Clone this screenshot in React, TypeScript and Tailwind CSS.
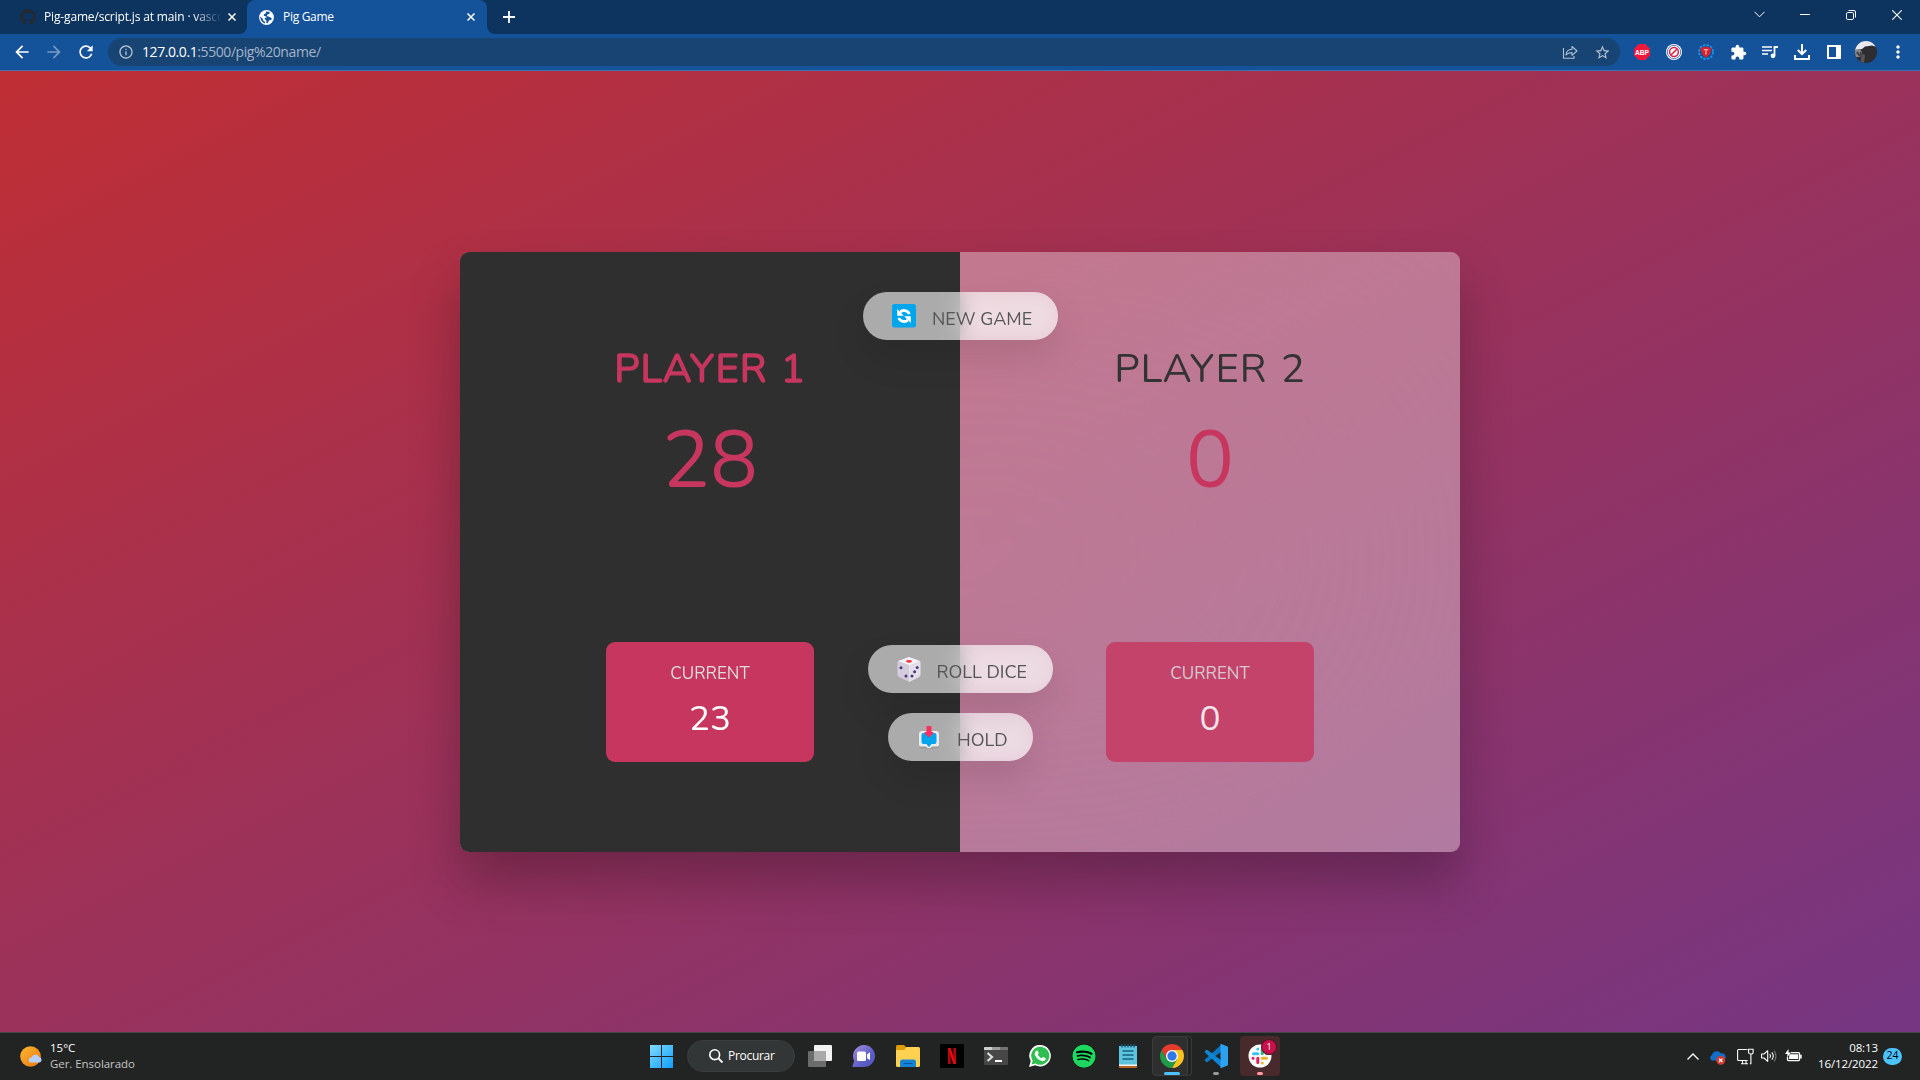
import type { ReactNode } from 'react';
import { FaGithub, FaSpotify } from 'react-icons/fa';
import {
  MdArrowBack,
  MdArrowForward,
  MdExtension,
  MdInfoOutline,
  MdMoreVert,
  MdRefresh,
  MdStarBorder,
} from 'react-icons/md';

/* ---------- Browser window ---------- */

function CloseX({ className = '' }: { className?: string }) {
  return (
    <svg viewBox="0 0 8 8" className={`h-2 w-2 shrink-0 ${className}`} stroke="currentColor" strokeWidth="1.5">
      <path d="M.5.5l7 7M7.5.5l-7 7" />
    </svg>
  );
}

function GlobeIcon() {
  return (
    <svg viewBox="0 0 15 15" className="h-[15px] w-[15px] shrink-0">
      <circle cx="7.500" cy="7.500" r="7.400" fill="#fff" />
      <path d="M7.200 1.600l3.600.3-.4 1.800-2 .7-.4 1.700 2 .6 2.600 1.300-.3 2-2.200.2-1.500 3-1.300-.2.100-2.600-1.700-1.500.2-1.200 2-.3-.7-1-2.300-.6-.2-1.500 1.700-.5z" fill="#14529a" />
      <path d="M1.300 6.500l2.300 2.200.6 1.800 1.700 1.200.2 1.700C3.300 12.800 1.200 10 1.300 6.500z" fill="#14529a" />
    </svg>
  );
}

function WindowButton({ children }: { children: ReactNode }) {
  return <div className="flex h-[29px] w-[46px] items-center justify-center text-white">{children}</div>;
}

function TabStrip() {
  return (
    <div className="flex h-[34px] bg-[#0c345f] text-xs text-white">
      <div className="flex w-[239px] shrink-0 items-center pl-5">
        <FaGithub className="h-4 w-4 shrink-0 text-[#24292e]" />
        <div className="-mr-3 ml-2 w-[190px] shrink-0 whitespace-nowrap [mask-image:linear-gradient(to_right,black_148px,transparent_178px)]">
          <span className="tracking-[-0.15px]">Pig-game/script.js at main · vasco</span>
        </div>
        <CloseX className="ml-[6px]" />
      </div>
      <div className="flex items-end bg-[#14529a]">
        <div className="h-[34px] w-2 rounded-br-lg bg-[#0c345f]" />
      </div>
      <div className="flex bg-[#0c345f]">
        <div className="flex h-[34px] w-[240px] items-center rounded-t-lg bg-[#14529a] pl-3">
          <GlobeIcon />
          <span className="ml-[9px] tracking-[-0.3px]">Pig Game</span>
          <CloseX className="ml-auto mr-[12px]" />
        </div>
      </div>
      <div className="flex items-end bg-[#14529a]">
        <div className="h-[34px] w-2 rounded-bl-lg bg-[#0c345f]" />
      </div>
      <svg viewBox="0 0 12 12" className="ml-2 mt-[11px] h-3 w-3" stroke="white" strokeWidth="1.8">
        <path d="M6 0v12M0 6h12" />
      </svg>
      <div className="ml-auto flex">
        <WindowButton>
          <svg viewBox="0 0 11 7" className="h-[7px] w-[11px]" fill="none" stroke="currentColor" strokeWidth="1">
            <path d="M.5.8l5 5 5-5" />
          </svg>
        </WindowButton>
        <WindowButton>
          <div className="h-px w-[10px] bg-white" />
        </WindowButton>
        <WindowButton>
          <svg viewBox="0 0 10 10" className="h-[10px] w-[10px]" fill="none" stroke="currentColor">
            <rect x=".5" y="2.5" width="7" height="7" rx="1.3" />
            <path d="M2.5.5H8Q9.5.5 9.500 2v5.5" />
          </svg>
        </WindowButton>
        <WindowButton>
          <svg viewBox="0 0 10 10" className="h-[10px] w-[10px]" stroke="currentColor" strokeWidth="1.1">
            <path d="M.3.3l9.400 9.400M9.700.3L.3 9.700" />
          </svg>
        </WindowButton>
      </div>
    </div>
  );
}

function ToolbarCell({ children }: { children: ReactNode }) {
  return <div className="flex w-8 shrink-0 items-center justify-center text-white">{children}</div>;
}

function Toolbar() {
  return (
    <div className="flex h-[37px] items-center border-b border-[#3f74b0] bg-[#14529a] pl-[6px] pr-[6px]">
      <ToolbarCell>
        <MdArrowBack className="h-5 w-5" />
      </ToolbarCell>
      <div className="flex w-8 justify-center text-[#769ac6]">
        <MdArrowForward className="h-5 w-5" />
      </div>
      <div className="flex w-8 justify-center text-white">
        <MdRefresh className="h-5 w-5" />
      </div>
      <div className="ml-[6px] flex h-7 w-[1512px] items-center rounded-full bg-[#184473] pl-[10px]">
        <MdInfoOutline className="h-4 w-4 text-[#b1c0d2]" />
        <span className="ml-[8px] text-sm tracking-[-0.42px] text-[#a3b4c8]">
          <span className="text-white">127.0.0.1</span>:5500/pig%20name/
        </span>
        <div className="ml-auto mr-[2px] flex text-[#b1c0d2]">
          <div className="flex w-8 items-center justify-center">
            <svg viewBox="0 0 16 14" className="h-[14px] w-4" fill="none" stroke="currentColor" strokeWidth="1.1">
              <path d="M1.500 3v10.300h10.500V11" />
              <path d="M4 10c.3-3.600 2.500-5.600 6-5.700V1.500L15 6l-5 4.300V7.600C7.300 7.600 5.500 8.300 4 10z" strokeLinejoin="round" />
            </svg>
          </div>
          <div className="flex w-8 items-center justify-center">
            <MdStarBorder className="h-[17px] w-[17px]" />
          </div>
        </div>
      </div>
      <div className="ml-[6px] flex h-full items-center">
        <ToolbarCell>
          <svg viewBox="0 0 16 16" className="h-4 w-4">
            <path d="M4.700 0h6.600L16 4.700v6.600L11.300 16H4.700L0 11.300V4.700z" fill="#f0193c" />
            <text
              x="1"
              y="10.800"
              textLength="14"
              lengthAdjust="spacingAndGlyphs"
              fontFamily="Liberation Sans"
              fontWeight="700"
              fontSize="8"
              fill="#fff"
            >
              ABP
            </text>
          </svg>
        </ToolbarCell>
        <ToolbarCell>
          <svg viewBox="0 0 16 16" className="h-4 w-4" fill="none">
            <circle cx="8" cy="8" r="8" fill="#fff" />
            <circle cx="8" cy="8" r="6.700" stroke="#2c5fb0" strokeWidth=".8" />
            <circle cx="8" cy="8" r="4.400" stroke="#dd1f45" strokeWidth="1.500" />
            <path d="M5.200 10.800l5.600-5.600" stroke="#dd1f45" strokeWidth="1.600" />
          </svg>
        </ToolbarCell>
        <ToolbarCell>
          <svg viewBox="0 0 16 16" className="h-4 w-4" fill="none">
            <circle cx="8" cy="8" r="7" stroke="#1b9af0" strokeWidth="1.600" strokeDasharray="2.600 1.100" />
            <path d="M8 2.200c1.700 1 3.200 1.300 5.300 1.300 0 4.800-1.600 8-5.300 10.200-3.700-2.200-5.300-5.400-5.300-10.200 2.100 0 3.600-.3 5.300-1.300z" fill="#d8212c" />
            <path d="M5.800 5.600h4.400M8 5.600v5" stroke="#f3a8ac" strokeWidth="1.300" />
          </svg>
        </ToolbarCell>
        <ToolbarCell>
          <MdExtension className="h-[17px] w-[17px]" />
        </ToolbarCell>
        <ToolbarCell>
          <svg viewBox="0 0 16 14" className="h-[14px] w-4" fill="none" stroke="currentColor" strokeWidth="1.600">
            <path d="M0 2h10M0 5.500h10M0 9h6" />
            <path d="M12.500 10.500V2H16" strokeWidth="1.800" />
            <circle cx="11" cy="10.800" r="2.400" fill="currentColor" stroke="none" />
          </svg>
        </ToolbarCell>
        <ToolbarCell>
          <svg viewBox="0 0 16 16" className="h-4 w-4" fill="none" stroke="currentColor" strokeWidth="2">
            <path d="M8 0v10M3.800 6L8 10.200 12.200 6M1 11v4h14v-4" />
          </svg>
        </ToolbarCell>
        <ToolbarCell>
          <div className="h-[14px] w-[14px] border-2 border-r-[5px] border-white" />
        </ToolbarCell>
        <ToolbarCell>
          <svg viewBox="0 0 22 22" className="h-[22px] w-[22px]">
            <defs>
              <clipPath id="avatar">
                <circle cx="11" cy="11" r="11" />
              </clipPath>
            </defs>
            <g clipPath="url(#avatar)">
              <rect width="22" height="22" fill="#2e2d30" />
              <path d="M0 0h22v6l-5-1.500-7 1L7 8 0 9z" fill="#e9eaf1" />
              <path d="M0 9l5-1 2 3-1 5-6 0z" fill="#8b8789" />
              <path d="M1 12l2-2 1 3 2-3 1 3-1 4z" fill="#45434a" />
              <path d="M7 13l3 1-1 8H5z" fill="#57545a" />
            </g>
          </svg>
        </ToolbarCell>
        <ToolbarCell>
          <MdMoreVert className="h-5 w-5" />
        </ToolbarCell>
      </div>
    </div>
  );
}

/* ---------- Game ---------- */

type PlayerProps = { name: string; score: number; current: number; active?: boolean };

function Player({ name, score, current, active = false }: PlayerProps) {
  return (
    <section className={`flex flex-1 flex-col items-center pt-[90px] ${active ? 'bg-[#2f2f2f]' : ''}`}>
      <h2
        className={`h-[55px] whitespace-nowrap text-[40px] leading-[55px] tracking-[1px] uppercase [word-spacing:2px] ${
          active ? 'text-[#c7365f] [-webkit-text-stroke:1.3px_#c7365f]' : 'text-[#333]'
        }`}
      >
        {name}
      </h2>
      <p className="mt-[10px] h-[109px] text-[80px] leading-[108px] text-[#c7365f]">{score}</p>
      <div
        className={`mt-[126px] flex h-[120px] w-[208px] flex-col items-center rounded-[9px] bg-[#c7365f] pt-5 ${
          active ? '' : 'opacity-80'
        }`}
      >
        <p className="h-[22px] text-[17px] leading-[23px] text-[#ddd]">CURRENT</p>
        <p className="mt-[10px] h-12 text-[35px] leading-[50px] text-white">{current}</p>
      </div>
    </section>
  );
}

function PillButton({ className, icon, children }: { className: string; icon: ReactNode; children: ReactNode }) {
  return (
    <button
      className={`absolute flex h-12 items-center whitespace-nowrap rounded-full bg-white/60 text-lg text-[#555] shadow-[0_17.5px_35px_rgba(0,0,0,0.1)] backdrop-blur-[10px] ${className}`}
    >
      {icon}
      {children}
    </button>
  );
}

function RefreshTile() {
  return (
    <svg viewBox="0 0 24 24" className="h-6 w-6" fill="none">
      <rect width="24" height="23.500" rx="2.500" fill="#00a6ed" />
      <path d="M8.200 8.200C10.500 5.500 15.500 6 17.300 10M15.800 15.800C13.500 18.500 8.500 18 6.700 14" stroke="#fff" strokeWidth="2.800" />
      <path d="M5.200 5v6.700h6.600zM18.800 19v-6.700h-6.600z" fill="#fff" />
    </svg>
  );
}

function DiceIcon() {
  return (
    <svg viewBox="0 0 24 25" className="h-[25px] w-6">
      <path d="M12 .5L23 4.500 12.500 9 1 4.500z" fill="#f4f1f8" stroke="#f4f1f8" strokeLinejoin="round" />
      <path d="M1 4.500l11.500 4.300V24.500L2 19.500Q1 19 1 18z" fill="#d3cadb" stroke="#d3cadb" strokeLinejoin="round" />
      <path d="M23 4.500L12.500 8.800V24.500L22 19.500Q23 19 23 18z" fill="#e4deeb" stroke="#e4deeb" strokeLinejoin="round" />
      <ellipse cx="12" cy="4.300" rx="3" ry="1.400" fill="#f3342f" />
      <g fill="#46397a">
        <circle cx="4" cy="10.700" r="1.500" />
        <circle cx="9" cy="19" r="1.500" />
        <circle cx="15" cy="19" r="1.500" />
        <circle cx="17.600" cy="14.800" r="1.500" />
        <circle cx="20.200" cy="10.500" r="1.500" />
      </g>
    </svg>
  );
}

function InboxIcon() {
  return (
    <svg viewBox="0 0 20 23" className="h-[23px] w-5">
      <path d="M2.500 7h15Q20 7 20 9.500V20q0 2.500-2.500 2.500h-15Q0 22.500 0 20V9.500Q0 7 2.500 7z" fill="#9b9b9b" />
      <path d="M3 5h14q3 0 3 3v11q0 1.500-2 1.500h-4.500L11 22H9l-2.500-1.500H2Q0 20.500 0 19V8q0-3 3-3z" fill="#eceaec" />
      <path d="M4.500 7h11q2 0 2 2v7q0 2-2 2h-3L10.700 20.500H9.300L7.500 18h-3q-2 0-2-2V9q0-2 2-2z" fill="#00a6ed" />
      <path d="M7.500 0h5v6h2Q14.500 8 10 11.500 5.500 8 5.500 6h2z" fill="#f8315f" />
    </svg>
  );
}

function GamePage() {
  return (
    <div className="flex h-[961px] items-center justify-center bg-[linear-gradient(to_top_left,#753682_0%,#bf2e34_100%)] font-['Nunito','Lato',sans-serif]">
      <main className="relative mt-px flex h-[600px] w-[1000px] rounded-[9px] bg-white/35 shadow-[0_30px_50px_rgba(0,0,0,0.25)] backdrop-blur-[200px]">
        <div className="flex flex-1 overflow-hidden rounded-[9px]">
          <Player name="Player 1" score={28} current={23} active />
          <Player name="Player 2" score={0} current={0} />
        </div>
        <PillButton className="left-[402.5px] top-10 w-[195px] pl-[29.5px]" icon={<RefreshTile />}>
          <span className="ml-4 mt-[5px]">NEW GAME</span>
        </PillButton>
        <PillButton className="left-[407.5px] top-[393px] w-[185px] pl-[29px]" icon={<DiceIcon />}>
          <span className="ml-4 mt-[5px]">ROLL DICE</span>
        </PillButton>
        <PillButton className="left-[427.5px] top-[461px] w-[145px] pl-[31.5px]" icon={<InboxIcon />}>
          <span className="ml-[18px] mt-[5px]">HOLD</span>
        </PillButton>
      </main>
    </div>
  );
}

/* ---------- Taskbar ---------- */

function TaskCell({ children, className = '' }: { children: ReactNode; className?: string }) {
  return <div className={`relative flex h-10 w-11 shrink-0 items-center justify-center ${className}`}>{children}</div>;
}

function WindowsLogo() {
  return (
    <svg viewBox="0 0 23 23" className="h-[23px] w-[23px]">
      <defs>
        <linearGradient id="win" x1="0" y1="0" x2="1" y2="1" gradientUnits="objectBoundingBox">
          <stop offset="0" stopColor="#7fdcff" />
          <stop offset="1" stopColor="#0f9dfb" />
        </linearGradient>
      </defs>
      <path d="M0 0h11v11H0zM12 0h11v11H12zM0 12h11v11H0zM12 12h11v11H12z" fill="url(#win)" />
    </svg>
  );
}

function TaskViewIcon() {
  return (
    <svg viewBox="0 0 24 22" className="h-[22px] w-6">
      <rect x="6" width="18" height="16" rx="1" fill="#f2f2f2" />
      <rect y="6" width="18" height="16" rx="1" fill="#6c6c6c" />
      <path d="M6 6h12v10H6z" fill="#a9a9a9" />
    </svg>
  );
}

function ChatIcon() {
  return (
    <svg viewBox="0 0 23 22" className="mr-px h-[22px] w-[23px]">
      <defs>
        <linearGradient id="chat" x1="0" y1="0" x2="1" y2="1">
          <stop offset="0" stopColor="#a78fdc" />
          <stop offset=".6" stopColor="#5f5fc8" />
          <stop offset="1" stopColor="#4f53b8" />
        </linearGradient>
      </defs>
      <path d="M12 0a11 11 0 110 22H1.500Q0 22 .6 20.500L2.200 16A11 11 0 0112 0z" fill="url(#chat)" />
      <rect x="5" y="6.500" width="9" height="9.500" rx="1.500" fill="#fff" />
      <path d="M15 9.500l3-2.300v8l-3-2.300z" fill="#fff" />
    </svg>
  );
}

function FolderIcon() {
  return (
    <svg viewBox="0 0 24 22" className="h-[22px] w-6">
      <path d="M0 1.500Q0 0 1.500 0H8l3 3v5H0z" fill="#dc9a06" />
      <path d="M10.500 2H22.500Q24 2 24 3.500V20.500Q24 22 22.500 22h-21Q0 22 0 20.500V5h8z" fill="#ffd152" />
      <path d="M4 22v-5q0-2.500 2.500-2.500h11q2.500 0 2.500 2.500v5z" fill="#1683d3" />
      <path d="M7.500 18.500h9" stroke="#0c5a9e" strokeWidth="1.200" />
    </svg>
  );
}

function NetflixIcon() {
  return (
    <svg viewBox="0 0 24 24" className="h-6 w-6">
      <rect width="24" height="24" fill="#000" />
      <path d="M8 4h2.700v16L8 20zM13.300 4H16v16h-2.700z" fill="#b1060f" />
      <path d="M8 4h2.700L16 20h-2.700z" fill="#e50914" />
    </svg>
  );
}

function TerminalIcon() {
  return (
    <svg viewBox="0 0 24 18" className="h-[18px] w-6">
      <rect width="24" height="18" rx="1" fill="#474747" />
      <path d="M0 1q0-1 1-1h7v3H0z" fill="#cfcfcf" />
      <path d="M8 0h8v3H8z" fill="#9c9c9c" />
      <path d="M16 0h7q1 0 1 1v2h-8z" fill="#747474" />
      <path d="M3.500 6l4.500 4-4.500 4" fill="none" stroke="#dcdcdc" strokeWidth="2.200" />
      <path d="M11 14h7" stroke="#fff" strokeWidth="2" />
    </svg>
  );
}

function WhatsAppIcon() {
  return (
    <svg viewBox="0 0 22 22" className="h-[22px] w-[22px]">
      <path d="M11.200 0a10.700 10.700 0 11-5 20.200L0 22l1.700-6A10.700 10.700 0 0111.200 0z" fill="#fff" />
      <path d="M11.200 1.800a9 9 0 11-4.700 16.600L2.600 19.500l1.100-3.800A9 9 0 0111.200 1.800z" fill="#2fbf50" />
      <path
        d="M7.600 5.700c.5-.3 1-.1 1.200.3l.8 1.900c.1.300 0 .7-.9 1.600 1 1.900 2.200 3 4.100 3.800.9-1.100 1.100-1.300 1.500-1.200l2.100 1c.5.300.3 1.300-.1 1.900-.8 1.200-2.600 1.400-4.200.8-3-1.100-5.100-3.200-6.200-5.700-.6-1.600.2-3.500 1.700-4.400z"
        fill="#fff"
      />
    </svg>
  );
}

function NotepadIcon() {
  return (
    <svg viewBox="0 0 18 24" className="h-6 w-[18px]">
      <path d="M0 21h18v2q0 1-1 1H1q-1 0-1-1z" fill="#b5651d" />
      <path d="M0 20h18v2H0z" fill="#f2f2f2" />
      <path d="M0 2h18v18.500H0z" fill="#5cc4dd" />
      <path d="M3 0v3.500M6 0v3.500M9 0v3.500M12 0v3.500M15 0v3.500" stroke="#14577a" strokeWidth="1.300" />
      <path d="M3.500 7h11M3.500 11h11M3.500 15h11" stroke="#12617f" strokeWidth="1.500" />
    </svg>
  );
}

function ChromeIcon() {
  return (
    <svg viewBox="0 0 24 24" className="h-6 w-6">
      <path d="M12 12L1.610 6A12 12 0 0122.390 6z" fill="#e33b2e" />
      <path d="M12 6h10.390A12 12 0 0112 24l5.200-9z" fill="#fcc31e" />
      <path d="M1.610 6A12 12 0 0012 24l5.200-9L12 12 6.800 15z" fill="#239a48" />
      <path d="M1.610 6L6.800 15 12 6z" fill="#e33b2e" />
      <circle cx="12" cy="12" r="6" fill="#fff" />
      <circle cx="12" cy="12" r="4.700" fill="#2f78ea" />
    </svg>
  );
}

function VsCodeIcon() {
  return (
    <svg viewBox="0 0 24 24" className="h-6 w-6">
      <path d="M18 0L1 15.400q-.8.7 0 1.500l1.300 1.200q.6.500 1.300 0L18 7z" fill="#0a78c4" />
      <path d="M18 24L1 8.600q-.8-.7 0-1.500l1.300-1.200q.6-.5 1.300 0L18 17z" fill="#0f86d4" />
      <path d="M17.500 0L24 2.800v18.400L17.500 24q-1 .2-1-.8V.8q0-1 1-.8z" fill="#2ca3f2" />
    </svg>
  );
}

function SlackIcon() {
  return (
    <svg viewBox="0 0 24 24" className="h-6 w-6" fill="none" strokeWidth="3" strokeLinecap="round">
      <circle cx="12" cy="12" r="11.500" fill="#fff" />
      <path d="M5.500 9.800h4.300M9.800 5v.1" stroke="#36c5f0" />
      <path d="M14.200 5.500v4.300M19 9.800h-.1" stroke="#2eb67d" />
      <path d="M18.500 14.200h-4.300M14.200 19v-.1" stroke="#ecb22e" />
      <path d="M9.800 18.500v-4.300M5 14.200h.1" stroke="#e01e5a" />
    </svg>
  );
}

function Tray() {
  return (
    <div className="ml-auto flex items-center text-white">
      <svg viewBox="0 0 12 7" className="h-[7px] w-3" fill="none" stroke="currentColor" strokeWidth="1.300">
        <path d="M.5 6.500L6 1l5.500 5.500" />
      </svg>
      <svg viewBox="0 0 17 14" className="ml-[10px] mt-1 h-[14px] w-[17px]">
        <path d="M3 9.500A3 3 0 013 4a5 5 0 019-1.500 3.500 3.500 0 012 7z" fill="#0f6fc9" />
        <circle cx="11.700" cy="9.300" r="4.500" fill="#d13a2f" />
        <path d="M10 7.600l3.400 3.400M13.400 7.600L10 11" stroke="#fff" strokeWidth="1.200" />
      </svg>
      <svg viewBox="0 0 17 17" className="ml-[11px] h-[17px] w-[17px]" fill="none" stroke="currentColor" strokeWidth="1.100">
        <path d="M10.500 1.500h-9Q.6 1.500.6 2.500v9q0 1 1 1h9M4 15.800h7M5.500 12.500v3.300M9 12.500v3.300" />
        <path d="M11.600 1.200h4.500v3.500q0 1.300-2.200 1.300t-2.300-1.300zM13.900 6v9.800h-1" />
      </svg>
      <svg viewBox="0 0 16 14" className="ml-[7px] h-[14px] w-4" fill="none" stroke="currentColor" strokeWidth="1.100">
        <path d="M.6 5v4H3l3.700 3.300V1.700L3 5z" strokeLinejoin="round" />
        <path d="M8.800 5q1.500 2 0 4M10.800 3.300q3 3.700 0 7.400" />
        <path d="M13 1.500q4 5.500 0 11" stroke="#777" />
      </svg>
      <svg viewBox="0 0 17 14" className="ml-[8px] h-[14px] w-[17px]" fill="none" stroke="currentColor" strokeWidth="1.300">
        <path d="M6 3.600h7.500q1 0 1 1v6q0 1-1 1h-10q-1 0-1-1V8" />
        <path d="M4.500 5.200h8.700v4.800H4z" fill="#fff" stroke="none" />
        <path d="M15.900 5.800v3.600" strokeWidth="1.600" />
        <path d="M3.500 0L0 5h2.500L2 8.500 6 3.500H3.500z" fill="#fff" stroke="none" />
      </svg>
      <div className="-mt-px ml-[15px] w-[61px] whitespace-nowrap text-right text-[11.500px] leading-4 tracking-[-0.1px]">
        <p>08:13</p>
        <p>16/12/2022</p>
      </div>
      <div className="ml-[5px] flex h-[17px] w-[19px] items-center justify-center rounded-full bg-[#4cc2ff] text-[10.500px] text-black">
        24
      </div>
    </div>
  );
}

function Taskbar() {
  return (
    <div className="grid h-12 grid-cols-[639px_1fr_240px] items-center border-t border-[#444] bg-[#222424] pb-px text-white">
      <div className="flex items-center pl-5">
        <svg viewBox="0 0 23 21" className="h-[21px] w-[23px]">
          <defs>
            <linearGradient id="sun" x1="0" y1="0" x2="1" y2="1">
              <stop offset="0" stopColor="#fbb92f" />
              <stop offset="1" stopColor="#ee7612" />
            </linearGradient>
          </defs>
          <circle cx="10.500" cy="10.500" r="10.300" fill="url(#sun)" />
          <path d="M11 16.500a2.500 2.500 0 01.5-5A4 4 0 0119 11a2.800 2.800 0 01.5 5.500z" fill="#b5d0f8" />
        </svg>
        <div className="-mt-px ml-[7px] text-[11.500px] leading-4">
          <p>15°C</p>
          <p className="tracking-[-0.05px] text-[#c4c4c4]">Ger. Ensolarado</p>
        </div>
      </div>
      <div className="flex items-center">
        <TaskCell>
          <WindowsLogo />
        </TaskCell>
        <div className="ml-1 mr-[3px] flex h-8 w-[108px] items-center rounded-full border border-[#3b3d3d] bg-[#333636] pl-[21px]">
          <svg viewBox="0 0 14 14" className="h-[14px] w-[14px]" fill="none" stroke="white" strokeWidth="1.600">
            <circle cx="5.700" cy="5.700" r="4.900" />
            <path d="M9.200 9.200l4.300 4.300" strokeWidth="1.900" />
          </svg>
          <span className="ml-[5px] text-xs tracking-[-0.3px]">Procurar</span>
        </div>
        <TaskCell>
          <TaskViewIcon />
        </TaskCell>
        <TaskCell>
          <ChatIcon />
        </TaskCell>
        <TaskCell>
          <FolderIcon />
        </TaskCell>
        <TaskCell>
          <NetflixIcon />
        </TaskCell>
        <TaskCell>
          <TerminalIcon />
        </TaskCell>
        <TaskCell>
          <WhatsAppIcon />
        </TaskCell>
        <TaskCell>
          <FaSpotify className="h-6 w-6 rounded-full bg-black text-[#1ed760]" />
        </TaskCell>
        <TaskCell>
          <NotepadIcon />
        </TaskCell>
        <TaskCell>
          <div className="absolute inset-y-0 left-[2px] w-9 rounded border border-[#3c3c3c] bg-[#2f2f2f]" />
          <div className="absolute inset-y-0 left-[36px] w-[6px] rounded-r border border-l-0 border-[#383838]" />
          <div className="relative">
            <ChromeIcon />
          </div>
          <div className="absolute bottom-px left-[14px] h-[3px] w-4 rounded-full bg-[#4cc2ff]" />
        </TaskCell>
        <TaskCell>
          <VsCodeIcon />
          <div className="absolute bottom-px left-[19px] h-[3px] w-[6px] rounded-full bg-[#9a9a9a]" />
        </TaskCell>
        <TaskCell>
          <div className="absolute inset-y-0 left-[2px] w-10 rounded bg-[#482a2c]" />
          <div className="relative">
            <SlackIcon />
          </div>
          <div className="absolute bottom-px left-[19px] h-[3px] w-[6px] rounded-full bg-[#ff99a4]" />
          <div className="absolute left-[24px] top-[4px] flex h-[14px] w-[14px] items-center justify-center rounded-full bg-[#c8104c] text-[9px] ring-1 ring-[#5a0f2a]">
            1
          </div>
        </TaskCell>
      </div>
      <div className="flex pr-[18px]">
        <Tray />
      </div>
    </div>
  );
}

export default function App() {
  return (
    <div className="h-[1080px] w-[1920px] overflow-hidden font-['Segoe_UI','Open_Sans',sans-serif]">
      <TabStrip />
      <Toolbar />
      <GamePage />
      <Taskbar />
    </div>
  );
}
